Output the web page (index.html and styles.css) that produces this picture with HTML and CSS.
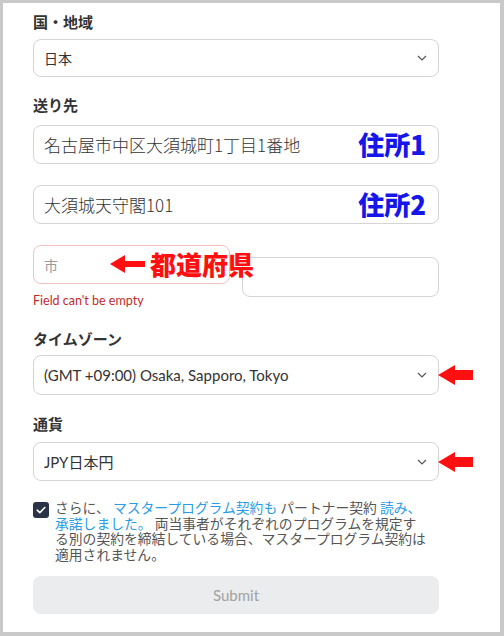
FILE: index.html
```html
<!DOCTYPE html>
<html lang="ja">
<head>
<meta charset="utf-8">
<title>Form</title>
<link rel="stylesheet" href="styles.css">
</head>
<body>
<div class="frame">
  <form class="form">
    <div class="field f-country">
      <label class="label">国・地域</label>
      <div class="control select s-country">
        <span class="value v-small">日本</span>
        <svg class="chev" width="10" height="6" viewBox="0 0 10 6"><path d="M1 1 L5 5 L9 1" fill="none" stroke="#555" stroke-width="1.2"/></svg>
      </div>
    </div>

    <div class="field f-address">
      <label class="label">送り先</label>
      <div class="control input">
        <span class="value v-big">名古屋市中区大須城町1丁目1番地</span>
        <span class="tag blue">住所1</span>
      </div>
      <div class="control input addr2">
        <span class="value v-big">大須城天守閣101</span>
        <span class="tag blue">住所2</span>
      </div>
      <div class="row">
        <div class="col">
          <div class="control input error"><span class="placeholder">市</span></div>
          <div class="err">Field can't be empty</div>
        </div>
        <div class="col">
          <div class="control input offset"></div>
        </div>
        <div class="pref">
          <svg width="35" height="18" viewBox="0 0 35 18"><polygon points="0,9 15,0 15,6 35,6 35,12 15,12 15,18" fill="#ff1010"/></svg>
          <span class="pref-text">都道府県</span>
        </div>
      </div>
    </div>

    <div class="field f-tz">
      <label class="label">タイムゾーン</label>
      <div class="control select s-tz">
        <span class="value v-latin">(GMT +09:00) Osaka, Sapporo, Tokyo</span>
        <svg class="chev" width="10" height="6" viewBox="0 0 10 6"><path d="M1 1 L5 5 L9 1" fill="none" stroke="#555" stroke-width="1.2"/></svg>
        <svg class="point" width="35" height="20" viewBox="0 0 35 20"><polygon points="0,10 17,0 17,5 35,5 35,15 17,15 17,20" fill="#ff1010"/></svg>
      </div>
    </div>

    <div class="field f-cur">
      <label class="label">通貨</label>
      <div class="control select">
        <span class="value v-latin">JPY日本円</span>
        <svg class="chev" width="10" height="6" viewBox="0 0 10 6"><path d="M1 1 L5 5 L9 1" fill="none" stroke="#555" stroke-width="1.2"/></svg>
        <svg class="point" width="35" height="20" viewBox="0 0 35 20"><polygon points="0,10 17,0 17,5 35,5 35,15 17,15 17,20" fill="#ff1010"/></svg>
      </div>
    </div>

    <div class="consent">
      <span class="check">
        <svg width="16" height="16" viewBox="0 0 16 16"><path d="M4.2 8.2 L6.8 10.7 L11.8 5.5" fill="none" stroke="#fff" stroke-width="1.6" stroke-linecap="round" stroke-linejoin="round"/></svg>
      </span>
      <div class="consent-text">
        <div class="cline">さらに、 <a class="link">マスタープログラム契約も</a> パートナー契約 <a class="link">読み、</a></div>
        <div class="cline"><a class="link">承諾しました。</a> 両当事者がそれぞれのプログラムを規定す</div>
        <div class="cline">る別の契約を締結している場合、マスタープログラム契約は</div>
        <div class="cline">適用されません。</div>
      </div>
    </div>

    <button type="button" class="submit">Submit</button>
  </form>
</div>
</body>
</html>
```

FILE: styles.css
```css
html, body {
  margin: 0;
  padding: 0;
  background: #fff;
}

.frame {
  width: 504px;
  height: 636px;
  box-sizing: border-box;
  border-style: solid;
  border-color: #c9c9c9;
  border-width: 3px 4px 4px 3px;
  background: #fff;
  font-family: "Lato", "Noto Sans CJK JP", sans-serif;
  overflow: hidden;
}

.form {
  width: 406px;
  padding: 9px 0 0 30px;
}

.label {
  display: block;
  font-family: "Noto Sans CJK JP", sans-serif;
  font-weight: 700;
  font-size: 15px;
  line-height: 20px;
  color: #333;
}

.control {
  position: relative;
  box-sizing: border-box;
  height: 39px;
  border: 1px solid #d4d4d4;
  border-radius: 8px;
  display: flex;
  align-items: center;
  padding: 0 11px 0 10px;
  background: #fff;
}

.f-country .label { margin-bottom: 7px; }
.s-country { height: 38px; }

.f-address { margin-top: 18px; }
.f-address .label { margin-bottom: 10px; }
.addr2 { margin-top: 21px; }

.value {
  color: #333;
  white-space: nowrap;
}
.v-small {
  font-family: "Noto Sans CJK JP", sans-serif;
  font-size: 14px;
}
.v-big {
  font-family: "Noto Sans CJK JP", sans-serif;
  font-size: 17px;
  font-weight: 300;
}
.v-latin {
  font-family: "Lato", "Noto Sans CJK JP", sans-serif;
  font-size: 15px;
  color: #333;
}

.chev {
  margin-left: auto;
  flex: none;
}

.tag {
  position: absolute;
  right: 12px;
  top: 5px;
  font-family: "Noto Sans CJK JP", sans-serif;
  font-weight: 900;
  font-size: 26px;
  line-height: 26px;
}
.blue { color: #1616e8; }

.row {
  position: relative;
  display: flex;
  gap: 12px;
  margin-top: 21px;
}
.col { flex: 1; }
.error { border-color: #f5c2c2; }
.placeholder {
  font-family: "Noto Sans CJK JP", sans-serif;
  font-size: 14px;
  color: #9a9a9a;
}
.offset {
  margin-top: 12px;
  height: 40px;
}
.err {
  margin-top: 9px;
  font-family: "Lato", sans-serif;
  font-size: 12.5px;
  line-height: 16px;
  color: #c42a2a;
}

.pref {
  position: absolute;
  left: 77px;
  top: 6px;
  height: 26px;
  display: flex;
  align-items: center;
  gap: 5px;
}
.pref-text {
  font-family: "Noto Sans CJK JP", sans-serif;
  font-weight: 900;
  font-size: 26px;
  line-height: 26px;
  color: #ff1010;
  white-space: nowrap;
}

.f-tz { margin-top: 20px; }
.f-tz .label { margin-bottom: 6px; }
.s-tz { height: 40px; }

.f-cur { margin-top: 19px; }
.f-cur .label { margin-bottom: 8px; }

.point {
  position: absolute;
  left: 100%;
  top: 50%;
  margin-top: -10px;
}

.consent {
  display: flex;
  gap: 6px;
  margin-top: 19px;
  align-items: flex-start;
}
.check {
  flex: none;
  width: 16px;
  height: 16px;
  margin-top: 2px;
  border-radius: 3px;
  background: #2b3446;
  display: flex;
}
.consent-text {
  font-family: "Noto Sans CJK JP", sans-serif;
  font-size: 13.8px;
  color: #555;
  white-space: nowrap;
}
.cline {
  height: 15.5px;
  line-height: 15.5px;
}
.link {
  color: #2a9be6;
  text-decoration: none;
}

.submit {
  display: block;
  width: 100%;
  height: 38px;
  margin-top: 14px;
  border: none;
  border-radius: 8px;
  background: #ebecee;
  color: #a2a2a2;
  font-family: "Lato", sans-serif;
  font-size: 15px;
  padding: 0;
}
```
